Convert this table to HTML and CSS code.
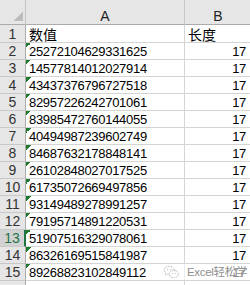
FILE: index.html
```html
<!DOCTYPE html>
<html>
<head>
<meta charset="utf-8">
<link rel="stylesheet" href="styles.css">
</head>
<body>
<div class="sheet">
  <div class="corner"></div><div class="colhead">A</div><div class="colhead colb">B</div>
  <div class="rowhead">1</div><div class="cell cjk">数值</div><div class="cell cjk colb">长度</div>
  <div class="rowhead">2</div><div class="cell txt">25272104629331625</div><div class="cell num colb">17</div>
  <div class="rowhead">3</div><div class="cell txt">14577814012027914</div><div class="cell num colb">17</div>
  <div class="rowhead">4</div><div class="cell txt">43437376796727518</div><div class="cell num colb">17</div>
  <div class="rowhead">5</div><div class="cell txt">82957226242701061</div><div class="cell num colb">17</div>
  <div class="rowhead">6</div><div class="cell txt">83985472760144055</div><div class="cell num colb">17</div>
  <div class="rowhead">7</div><div class="cell txt">40494987239602749</div><div class="cell num colb">17</div>
  <div class="rowhead">8</div><div class="cell txt">84687632178848141</div><div class="cell num colb">17</div>
  <div class="rowhead">9</div><div class="cell txt">26102848027017525</div><div class="cell num colb">17</div>
  <div class="rowhead">10</div><div class="cell txt">61735072669497856</div><div class="cell num colb">17</div>
  <div class="rowhead">11</div><div class="cell txt">93149489278991257</div><div class="cell num colb">17</div>
  <div class="rowhead">12</div><div class="cell txt">79195714891220531</div><div class="cell num colb">17</div>
  <div class="rowhead active">13</div><div class="cell txt">51907516329078061</div><div class="cell num colb">17</div>
  <div class="rowhead">14</div><div class="cell txt">86326169515841987</div><div class="cell num colb">17</div>
  <div class="rowhead">15</div><div class="cell txt">89268823102849112</div><div class="cell num colb">17</div>
  <div class="rowhead"></div><div class="cell"></div><div class="cell colb"></div>
</div>
<div class="watermark">
  <svg class="wm-icon" width="17" height="14" viewBox="0 0 17 14">
    <path d="M6.5 1.2c-3 0-5.3 1.9-5.3 4.2 0 1.3.7 2.4 1.8 3.2l-.5 1.5 1.8-.9c.7.2 1.4.3 2.2.3" fill="none" stroke="#b5b5b5" stroke-width="0.9" stroke-dasharray="1.6 0.8"/>
    <path d="M11.8 5.5c-.6-2.5-2.9-4.3-5.3-4.3" fill="none" stroke="#b5b5b5" stroke-width="0.9" stroke-dasharray="1.6 0.8"/>
    <ellipse cx="10.8" cy="9" rx="4.6" ry="3.6" fill="none" stroke="#b5b5b5" stroke-width="0.9" stroke-dasharray="1.6 0.8"/>
    <circle cx="4.6" cy="4.3" r="0.6" fill="#b5b5b5"/>
    <circle cx="8" cy="4.3" r="0.6" fill="#b5b5b5"/>
    <circle cx="9.3" cy="8.3" r="0.5" fill="#b5b5b5"/>
    <circle cx="12.3" cy="8.3" r="0.5" fill="#b5b5b5"/>
  </svg>
  <span class="wm-text">Excel轻松学</span>
</div>
</body>
</html>
```
FILE: styles.css
```css
html, body {
  margin: 0;
  padding: 0;
  background: #ffffff;
  overflow: hidden;
}
body {
  width: 250px;
  height: 285px;
  position: relative;
  font-family: "Liberation Sans", Arial, sans-serif;
}
.sheet {
  display: grid;
  grid-template-columns: 26px 159px 66px;
  grid-template-rows: 25px 18px repeat(14, 17px) 17px;
}
.sheet > div {
  box-sizing: border-box;
  display: flex;
  align-items: flex-end;
  line-height: 14px;
  overflow: hidden;
  white-space: nowrap;
}
.corner {
  background: #e6e6e6 linear-gradient(to top left, #bcbcbc 50%, transparent 50%) no-repeat right 2px bottom 3px / 9px 9px;
  border-right: 1px solid #c4c4c4;
  border-bottom: 1px solid #ababab;
}
.colhead {
  background: #e6e6e6;
  border-right: 1px solid #c8c8c8;
  border-bottom: 1px solid #ababab;
  justify-content: center;
  font-size: 14px;
  color: #222;
  padding-bottom: 1px;
}
.rowhead {
  background: #e6e6e6;
  border-right: 1px solid #ababab;
  border-bottom: 1px solid #c8c8c8;
  justify-content: center;
  font-size: 14px;
  color: #333;
  padding-bottom: 1px;
}
.rowhead.active {
  background: #d2d2d2;
  color: #217346;
  border-right: 2px solid #217346;
}
.cell {
  border-right: 1px solid #d4d4d4;
  border-bottom: 1px solid #d4d4d4;
  font-size: 13px;
  color: #000;
  padding-left: 3px;
}
.sheet > .colb {
  border-right: none;
}
.txt {
  letter-spacing: -0.3px;
  background: linear-gradient(135deg, #1f7a2e 0 50%, transparent 50%) no-repeat left top / 5px 5px;
}
.num {
  justify-content: flex-end;
  padding-right: 5px;
  letter-spacing: -0.3px;
}
.cjk {
  font-family: "Liberation Sans", "Noto Sans CJK SC", sans-serif;
  font-size: 14px;
}
.watermark {
  position: absolute;
  left: 162px;
  top: 264px;
  display: flex;
  align-items: center;
  gap: 7px;
  padding: 1px 0 1px 1px;
  white-space: nowrap;
  background: rgba(255, 255, 255, 0.55);
}
.wm-icon {
  display: block;
  flex: none;
}
.wm-text {
  font-family: "Liberation Sans", "Noto Sans CJK SC", sans-serif;
  font-size: 11.5px;
  line-height: 13px;
  color: #8e8e8e;
  letter-spacing: -0.3px;
  white-space: nowrap;
}
```
